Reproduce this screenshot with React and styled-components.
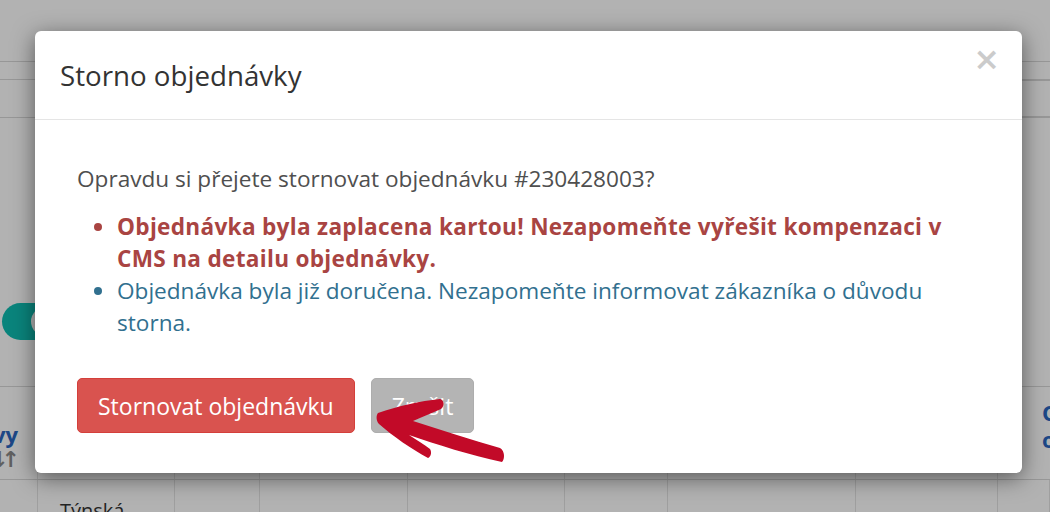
import styled, { createGlobalStyle } from "styled-components";

const GlobalStyle = createGlobalStyle`
    * { box-sizing: border-box; }
    body {
        margin: 0;
        font-family: 'Open Sans', 'Liberation Sans', sans-serif;
    }
`;

const columns = [38, 137, 85, 148, 157, 103, 188, 142];
const gridColumns = columns.map((c) => c + "px").join(" ") + " 1fr";

function BackgroundPage() {
    return (
        <PageContent>
            <TopBar />
            <FilterRow />
            <SearchRow>
                <SearchBox />
            </SearchRow>
            <FilterArea>
                <Toggle>
                    <Knob />
                </Toggle>
            </FilterArea>
            <TableHead>
                <HeadCell $align="right">
                    <span>vy</span>
                    <SortIcon>↓↑</SortIcon>
                </HeadCell>
                {columns.slice(1).map((w, i) => (
                    <HeadCell key={i} />
                ))}
                <HeadCell $last>
                    <span>Objednáno</span>
                    <span>od</span>
                </HeadCell>
            </TableHead>
            <TableRow>
                <BodyCell />
                <BodyCell>Týnská</BodyCell>
                {columns.slice(2).map((w, i) => (
                    <BodyCell key={i} />
                ))}
                <BodyCell />
            </TableRow>
        </PageContent>
    );
}

function CancelModal() {
    return (
        <Modal>
            <ModalHeader>
                <ModalTitle>Storno objednávky</ModalTitle>
                <CloseButton>×</CloseButton>
            </ModalHeader>
            <ModalBody>
                <Question>Opravdu si přejete stornovat objednávku #230428003?</Question>
                <Notes>
                    <Note $kind="danger">
                        Objednávka byla zaplacena kartou! Nezapomeňte vyřešit kompenzaci v CMS na detailu objednávky.
                    </Note>
                    <Note $kind="info">
                        Objednávka byla již doručena. Nezapomeňte informovat zákazníka o důvodu storna.
                    </Note>
                </Notes>
            </ModalBody>
            <ModalFooter>
                <Button $variant="danger">Stornovat objednávku</Button>
                <Button $variant="default">Zrušit</Button>
            </ModalFooter>
        </Modal>
    );
}

function Arrow() {
    return (
        <ArrowMark width="140" height="72" viewBox="370 395 140 72">
            <path
                d="M378 413 C 398 406, 420 401, 440 399 C 444 400, 445 406, 441 409 C 432 413, 422 417, 413 421
                   C 442 430, 472 440, 500 448 C 505 451, 505 459, 502 462 C 470 455, 438 445, 409 435
                   C 416 440, 424 444, 430 449 C 432 452, 431 457, 428 458 C 410 448, 394 437, 379 424
                   C 376 421, 376 415, 378 413 Z"
                fill="#c20a28"
            />
        </ArrowMark>
    );
}

export default function App() {
    return (
        <Page>
            <GlobalStyle />
            <BackgroundPage />
            <Backdrop>
                <CancelModal />
            </Backdrop>
            <Arrow />
        </Page>
    );
}

const Page = styled.div`
    position: relative;
    width: 1050px;
    height: 512px;
    overflow: hidden;
    background: #ffffff;
`;

const PageContent = styled.div`
    display: flex;
    flex-direction: column;
    width: 1050px;
`;

const TopBar = styled.div`
    height: 62px;
    border-bottom: 1px solid #d8d8d8;
`;

const FilterRow = styled.div`
    height: 18px;
    border-bottom: 1px solid #d8d8d8;
`;

const SearchRow = styled.div`
    height: 38px;
    display: flex;
    padding-left: 900px;
    border-bottom: 1px solid #d8d8d8;
`;

const SearchBox = styled.div`
    flex: 1;
    margin-right: -6px;
    border: 1px solid #d8d8d8;
    border-radius: 6px;
`;

const FilterArea = styled.div`
    height: 269px;
    display: flex;
    align-items: flex-end;
    padding: 0 0 46px 2px;
    border-bottom: 1px solid #d8d8d8;
`;

const Toggle = styled.div`
    width: 62px;
    height: 37px;
    border-radius: 19px;
    background: #0fbdb2;
    display: flex;
    align-items: center;
    padding-left: 29px;
`;

const Knob = styled.div`
    width: 29px;
    height: 29px;
    border-radius: 50%;
    background: #ffffff;
`;

const TableHead = styled.div`
    display: grid;
    grid-template-columns: ${gridColumns};
    height: 93px;
    border-bottom: 1px solid #d8d8d8;
`;

const HeadCell = styled.div`
    display: flex;
    flex-direction: column;
    align-items: ${(p) => (p.$align === "right" ? "flex-end" : "flex-start")};
    justify-content: center;
    padding: ${(p) => (p.$last ? "0 0 14px 44px" : p.$align === "right" ? "26px 19px 0 0" : "0")};
    font-size: 22px;
    font-weight: 700;
    line-height: 27px;
    color: #2a66c0;
    white-space: nowrap;
    border-right: 1px solid #e4e4e4;
`;

const SortIcon = styled.span`
    font-family: 'DejaVu Sans', sans-serif;
    font-size: 22px;
    font-weight: 700;
    letter-spacing: -7px;
    margin-right: 5px;
    color: #8a8a8a;
    line-height: 24px;
`;

const TableRow = styled.div`
    display: grid;
    grid-template-columns: ${gridColumns};
    height: 60px;
`;

const BodyCell = styled.div`
    padding: 17px 0 0 22px;
    font-size: 20px;
    color: #333333;
    white-space: nowrap;
    border-right: 1px solid #e4e4e4;
`;

const Backdrop = styled.div`
    position: absolute;
    inset: 0;
    background: rgba(0, 0, 0, 0.3);
    display: flex;
    align-items: flex-start;
    padding: 31px 28px 0 35px;
`;

const Modal = styled.div`
    width: 987px;
    background: #ffffff;
    border-radius: 6px;
    box-shadow: 0 5px 22px rgba(0, 0, 0, 0.5);
    display: flex;
    flex-direction: column;
`;

const ModalHeader = styled.div`
    height: 89px;
    display: flex;
    justify-content: space-between;
    align-items: center;
    padding: 0 22px 0 26px;
    border-bottom: 1px solid #e5e5e5;
`;

const ModalTitle = styled.h4`
    margin: 0 0 0 -1px;
    font-size: 27.7px;
    font-weight: 400;
    color: #333333;
    line-height: 40px;
`;

const CloseButton = styled.span`
    align-self: flex-start;
    margin-top: 12px;
    font-size: 32px;
    font-weight: 700;
    line-height: 32px;
    color: #000000;
    opacity: 0.2;
    font-family: 'DejaVu Sans', sans-serif;
`;

const ModalBody = styled.div`
    padding: 43px 42px 0 42px;
`;

const Question = styled.p`
    margin: 0 0 16px;
    font-size: 22.6px;
    line-height: 32px;
    color: #4f4f4f;
`;

const Notes = styled.ul`
    margin: 0;
    padding-left: 40px;
`;

const Note = styled.li`
    font-size: 22.6px;
    line-height: 32px;
    font-weight: ${(p) => (p.$kind === "danger" ? 700 : 400)};
    letter-spacing: ${(p) => (p.$kind === "danger" ? "0.3px" : "0")};
    color: ${(p) => (p.$kind === "danger" ? "#a94442" : "#31708f")};
`;

const ModalFooter = styled.div`
    display: flex;
    gap: 16px;
    padding: 39px 42px 40px;
`;

const Button = styled.button`
    height: 55px;
    padding: 0 20px;
    font-family: 'Open Sans', 'Liberation Sans', sans-serif;
    font-size: 23px;
    color: #ffffff;
    border-radius: 5px;
    border: 1px solid ${(p) => (p.$variant === "danger" ? "#d43f3a" : "#adadad")};
    background: ${(p) => (p.$variant === "danger" ? "#d9534f" : "#b4b4b4")};
`;

const ArrowMark = styled.svg`
    position: absolute;
    left: 370px;
    top: 395px;
`;
